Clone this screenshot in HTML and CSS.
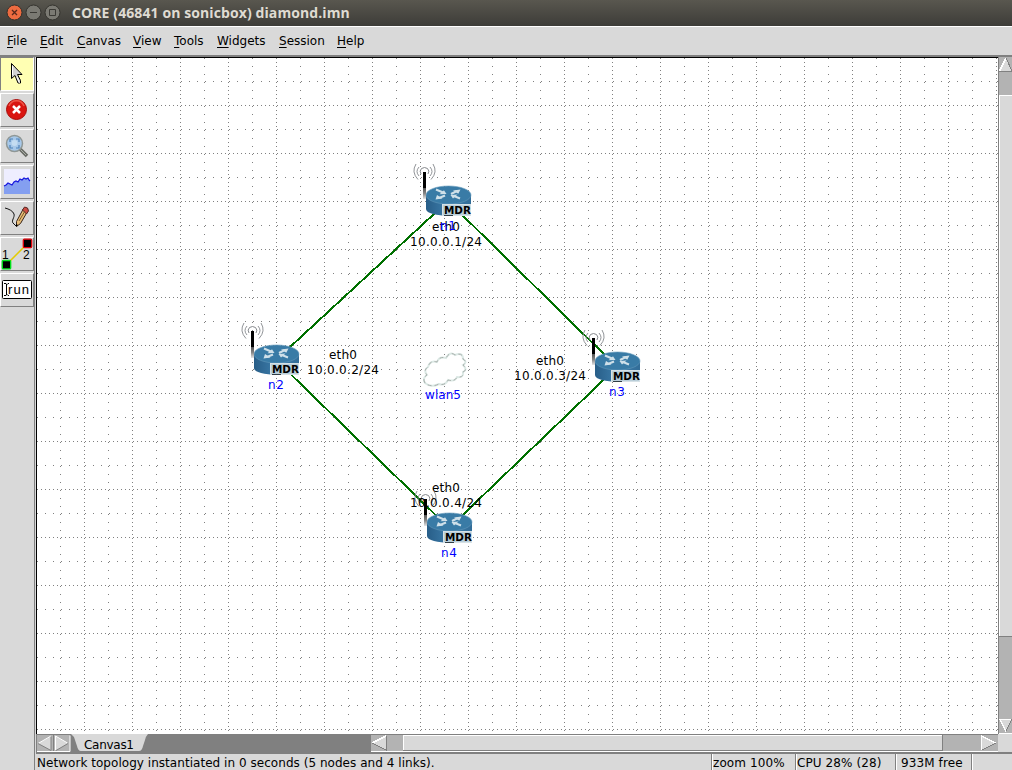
FILE: index.html
```html
<!DOCTYPE html>
<html lang="en">
<head>
<meta charset="utf-8">
<title>CORE (46841 on sonicbox) diamond.imn</title>
<link rel="stylesheet" href="styles.css">
</head>
<body>
<div class="window">
  <header class="titlebar">
    <svg class="controls" width="64" height="26" viewBox="0 0 64 26">
      <circle cx="14.5" cy="12.5" r="7.5" fill="#ed6b40" stroke="#34302a"/>
      <path d="M12 10l5 5M17 10l-5 5" stroke="#57281b" stroke-width="1.3"/>
      <circle cx="33.5" cy="12.5" r="7.5" fill="#7b7a73" stroke="#34332e"/>
      <path d="M30 12.5h7" stroke="#3b3a35"/>
      <circle cx="52.500" cy="12.500" r="7.500" fill="#7b7a73" stroke="#34332e"/>
      <path d="M49.500 9.500h6v6h-6z" fill="none" stroke="#3b3a35"/>
    </svg>
    <span class="title">CORE (46841 on sonicbox) diamond.imn</span>
  </header>
  <nav class="menubar">
    <span class="m-file"><u>F</u>ile</span><span class="m-edit"><u>E</u>dit</span><span class="m-canvas"><u>C</u>anvas</span><span class="m-view"><u>V</u>iew</span><span class="m-tools"><u>T</u>ools</span><span class="m-widgets"><u>W</u>idgets</span><span class="m-session"><u>S</u>ession</span><span class="m-help"><u>H</u>elp</span>
  </nav>
  <div class="main">
    <aside class="toolbar">
      <button class="tool active"><svg width="32" height="32" viewBox="1 58 32 32"><path d="M11.500 63.500v15l3.500-3 3 7.500h2.500v-2.500l-3-6h4.500z" fill="#d2d2d2" stroke="#000"/><path d="M12.500 66v9" stroke="#fff"/><path d="M17 77l2.500 6" stroke="#fff"/></svg></button>
      <button class="tool"><svg width="32" height="32" viewBox="1 94 32 32"><circle cx="16.500" cy="109.500" r="10" fill="#d91510" stroke="#a90b08"/><path d="M9 106a8 8 0 0 1 15 0" fill="none" stroke="#ef5547" stroke-width="1.500"/><path d="M13 106l7 7M20 106l-7 7" stroke="#fff" stroke-width="2.500"/></svg></button>
      <button class="tool"><svg width="32" height="32" viewBox="1 130 32 32"><path d="M20 149l7 7" stroke="#686b65" stroke-width="3.500"/><path d="M21 150l5 5" stroke="#aaaea7"/><circle cx="14.500" cy="143.500" r="8" fill="#a7c8e9" stroke="#8f9796" stroke-width="1.500"/><path d="M10 142v-3h3M16 139h3v3M19 145v3h-3M13 148h-3v-3" fill="none" stroke="#4f82b8" stroke-width="1.200"/><circle cx="14.500" cy="143" r="3" fill="#c4dcf1"/></svg></button>
      <button class="tool"><svg width="32" height="32" viewBox="1 166 32 32"><path d="M4 169h26v25H4z" fill="#eeeeff"/><path d="M4 186l2-1 2-2 2 1 2 1 2-3 2-1 2 1 2-3 2 1 2-2 2 1 2-1 1 2 1 1v13H4z" fill="#849ff0"/><path d="M4 186l2-1 2-2 2 1 2 1 2-3 2-1 2 1 2-3 2 1 2-2 2 1 2-1 1 2 1 1" fill="none" stroke="#1515dd" stroke-width="1.200"/></svg></button>
      <button class="tool"><svg width="32" height="32" viewBox="1 202 32 32"><path d="M5 208c4 1 8 3 9 6s-3 7-1 9l3 3" fill="none" stroke="#111"/><path d="M16.500 226.500v-5l7-13q3-1 4 3l-7 12z" fill="#e7bd78" stroke="#37251b"/><path d="M22.500 210l2-3q4 0 4 4l-2 3z" fill="#cc4b44" stroke="#542b26"/><path d="M19 221l6-10" stroke="#7b592a"/><path d="M16 227v-3l2 1z"/></svg></button>
      <button class="tool"><svg width="32" height="32" viewBox="1 238 32 32"><path d="M7 264l20-20" stroke="#e3cb00" stroke-width="1.500"/><rect x="2.300" y="260.500" width="8.400" height="8.400" rx="1" fill="#000" stroke="#00e51b" stroke-width="1.300"/><rect x="23.300" y="239.200" width="8.400" height="8.400" rx="1" fill="#000" stroke="#e30008" stroke-width="1.300"/><text x="2" y="259" class="digit">1</text><text x="23" y="259" class="digit">2</text></svg></button>
      <button class="tool"><svg width="32" height="32" viewBox="1 274 32 32"><rect x="2.500" y="280.500" width="29" height="18" rx="1" fill="#fff" stroke="#000"/><path d="M4 283.500h2l1 1 1-1h1M6.500 284v11M4 295.500h2l1-1 1 1h1" fill="none" stroke="#000"/><text x="8" y="294" class="run" textLength="21">run</text></svg></button>
    </aside>
    <section class="workspace">
      <div class="view">
        <svg class="canvas" width="962" height="677" viewBox="36 57 962 677">
          <defs>
            <pattern id="grid" x="36" y="57" width="48" height="48" patternUnits="userSpaceOnUse">
              <g stroke="#808080" stroke-width="1" shape-rendering="crispEdges">
                <path d="M1 .5H48M.5 1V48" stroke-dasharray="1 3"/>
                <path d="M1 24.500H48M24.500 1V48" stroke-dasharray="1 7"/>
              </g>
            </pattern>
            <linearGradient id="side"><stop offset="0" stop-color="#285e88"/><stop offset=".5" stop-color="#3d7dab"/><stop offset="1" stop-color="#326d98"/></linearGradient>
            <linearGradient id="mast" x2="0" y2="1"><stop offset=".58" stop-color="#000"/><stop offset=".6" stop-color="#555"/><stop offset=".8" stop-color="#888"/><stop offset="1" stop-color="#e5e5e5"/></linearGradient>
            <g id="router">
              <path d="M-22-6v14c0 9 45 9 45 0V-6z" fill="url(#side)"/>
              <ellipse cx=".5" cy="-6" rx="22.500" ry="9" fill="#397ba6" stroke="#6399bb" stroke-width=".6"/>
              <path d="M-12-11.500l7 3M3-7l6-3M-3-5.500l-6 2.500M12-2.500l-6-2.500" stroke="#cfe0e9" stroke-width="2"/>
              <path d="M-1.500-7l-7 .2 4.500-4zM12.500-11.500l-2.200 4.200-5.300-3.200zM-12.500-1.500l1.500-4.500 5.500 3.500zM2.500-6l7-.5-4.500 4z" fill="#cfe0e9"/>
              <rect x="-5.500" y="3.500" width="28" height="11" fill="#b9ced9" stroke="#d6e1e6"/>
              <path d="M-4 14.500H5" stroke="#303d45"/>
              <text x="-4" y="13" class="mdr" textLength="27" lengthAdjust="spacingAndGlyphs">MDR</text>
              <rect x="-25" y="-29" width="3" height="27" fill="url(#mast)"/>
              <g fill="none" stroke="#85888c"><path d="M-27-27q-2-3 .5-5.500 3-2 6 0 2.500 2.500 .5 5.500"/><path d="M-29-34q-4 4.500 0 9M-18-34q4 4.500 0 9M-32-37q-5 8 2 15.500M-15-37q5 8-2 15.500" stroke-width=".9"/></g>
            </g>
          </defs>
          <rect x="36" y="57" width="962" height="677" fill="#fff"/>
          <rect x="36" y="57" width="962" height="677" fill="url(#grid)"/>
          <path class="link" d="M448 201L276 360L449 528L617 367Z"/>
          <g fill="none">
            <path d="M425 383q-3-5 2-8-4-5 1-8 2-7 9-5 2-6 9-4 4-7 9-3 8-3 8 4 5 3 0 6 5 5 0 7 1 6-6 5-2 5-9 3-3 6-9 4-8 4-14-1z" fill="#fff" stroke="#dce9e5" stroke-width="2"/>
            <path d="M425 383q-3-5 2-8-4-5 1-8 2-7 9-5 2-6 9-4 4-7 9-3 8-3 8 4 5 3 0 6 5 5 0 7 1 6-6 5-2 5-9 3-3 6-9 4-8 4-14-1z" stroke="#a9afac" stroke-dasharray="4 3"/>
          </g>
          <use href="#router" x="448" y="201"/>
          <use href="#router" x="276" y="360"/>
          <use href="#router" x="617" y="367"/>
          <use href="#router" x="449" y="528"/>
          <g class="address">
            <text x="432" y="231" textLength="28">eth0</text><text x="410" y="246" textLength="72">10.0.0.1/24</text>
            <text x="329" y="359" textLength="28">eth0</text><text x="307" y="374" textLength="72">10.0.0.2/24</text>
            <text x="536" y="365" textLength="28">eth0</text><text x="514" y="380" textLength="72">10.0.0.3/24</text>
            <text x="432" y="492" textLength="28">eth0</text><text x="410" y="507" textLength="72">10.0.0.4/24</text>
          </g>
          <g class="name"><text x="440" y="230" textLength="16">n1</text><text x="268" y="389" textLength="16">n2</text><text x="609" y="396" textLength="16">n3</text><text x="441" y="557" textLength="16">n4</text><text x="425" y="399" textLength="36">wlan5</text></g>
          <path d="M36 57.500H998M36.500 57V734" stroke="#000" shape-rendering="crispEdges"/>
        </svg>
        <svg class="vscroll" width="14" height="677" viewBox="998 57 14 677" shape-rendering="crispEdges">
          <path d="M998 57h14v677h-14z" fill="#b3b3b3"/><path d="M998.500 57v677" stroke="#808080"/>
          <path d="M999 71l7-13 6 12v1z" fill="#d9d9d9"/><path d="M999.500 71l6.500-13" stroke="#fff" stroke-width="1.500"/><path d="M1006 58l6 13h-13" fill="none" stroke="#808080"/>
          <path d="M999 95h13v541h-13z" fill="#d9d9d9"/><path d="M999.500 636V95.500h13" fill="none" stroke="#fff"/><path d="M999 636.500h13" stroke="#808080"/>
          <path d="M999 719h13l-6 13z" fill="#d9d9d9"/><path d="M1012 719.500h-12l6 12" fill="none" stroke="#fff" stroke-width="1.500"/><path d="M1006 731l6-12" stroke="#808080"/><path d="M999 733.500h13" stroke="#fff"/>
        </svg>
      </div>
      <div class="bottombar">
        <svg class="tabs" width="335" height="18" viewBox="36 734 335 18">
          <path d="M36 734h335v18H36z" fill="#808080"/><path d="M37 735h33v16H37z" fill="#b3b3b3"/><path d="M37 751.500h33v-16" fill="none" stroke="#fff"/>
          <path d="M38 743.500l13-7v14zM68 743.500l-12-7v14z" fill="#d9d9d9"/><path d="M51 736l-13 7.500M55.500 750v-14l12 7" fill="none" stroke="#fff"/><path d="M38 743.500l13 7v-14M68 743.500l-12 7M53.500 735v16" fill="none" stroke="#808080"/>
          <path d="M71 734h77q-2 2-3 6l-2 6q-1 5-4 5H81q-3 0-4-5l-2-6q-1-4-4-6z" fill="#d9d9d9"/><text x="84" y="749" textLength="50">Canvas1</text>
        </svg>
        <svg class="hscroll" width="627" height="18" viewBox="371 734 627 18" shape-rendering="crispEdges">
          <path d="M371 734h627v18H371z" fill="#b3b3b3"/><path d="M371 734.500h627" stroke="#808080"/><path d="M371 751.500h627V734" fill="none" stroke="#fff"/>
          <path d="M372 743l14-7v14z" fill="#d9d9d9"/><path d="M386 736l-14 7" stroke="#fff" stroke-width="1.500"/><path d="M372 743l14 7v-14" fill="none" stroke="#808080"/>
          <path d="M403 735h540v16H403z" fill="#d9d9d9"/><path d="M403.500 751v-15.500h539" fill="none" stroke="#fff"/><path d="M403 750.500h539.500V735" fill="none" stroke="#808080"/>
          <path d="M981 736l15 7-15 7z" fill="#d9d9d9"/><path d="M981.500 750v-14l14 7" fill="none" stroke="#fff" stroke-width="1.500"/><path d="M982 750l14-7" stroke="#808080"/>
        </svg>
        <div class="corner"></div>
      </div>
      <footer class="status"><span class="message">Network topology instantiated in 0 seconds (5 nodes and 4 links).</span><span class="zoom">zoom 100%</span><span class="cpu">CPU 28% (28)</span><span class="memory">933M free</span></footer>
    </section>
  </div>
</div>
</body>
</html>
```
FILE: styles.css
```css
* { box-sizing: border-box; }
body { margin: 0; overflow: hidden; background: #d9d9d9; color: #000; font: 12px "DejaVu Sans", sans-serif; }
svg { display: block; flex: none; }
.window { width: 1012px; height: 770px; display: flex; flex-direction: column; }
.titlebar { height: 26px; display: flex; align-items: center; background: linear-gradient(#59574f, #3d3c38); flex: none; }
.title { margin-left: 8px; color: #dfdbd2; font: bold 14px/26px "Open Sans", sans-serif; letter-spacing: .1px; white-space: nowrap; }
.menubar { height: 29px; border-top: 1px solid #fff; padding-left: 7px; display: flex; line-height: 29px; flex: none; white-space: nowrap; }
.menubar u { text-underline-offset: 2px; text-decoration-thickness: 1px; }
.menubar span { flex: none; }
.m-file { width: 33px; }
.m-edit { width: 37px; }
.m-canvas { width: 56px; }
.m-view { width: 41px; }
.m-tools { width: 43px; }
.m-widgets { width: 62px; }
.m-session { width: 58px; }
.main { display: flex; height: 715px; border-top: 2px solid #808080; }
.toolbar { width: 35px; flex: none; display: flex; flex-direction: column; gap: 2px; }
.toolbar { border-right: 1px solid #808080; }
.tool { width: 34px; height: 34px; flex: none; padding: 0; border: 1px solid; border-color: #fff #808080 #808080 #fff; background: #d9d9d9; display: block; }
.tool.active { background: #ffffb3; border-color: #808080 #fff #fff #808080; }
.digit { font-size: 12px; }
.run { font-size: 13px; }
.workspace { width: 977px; padding-left: 1px; display: flex; flex-direction: column; }
.view { display: flex; height: 677px; flex: none; }
.link { fill: none; stroke: #007000; stroke-width: 2; shape-rendering: crispEdges; }
.mdr { font: bold 10.5px "DejaVu Sans", sans-serif; }
.name { fill: #0000ff; }
.bottombar { display: flex; height: 18px; flex: none; }
.corner { width: 14px; background: #d9d9d9; }
.status { height: 18px; border-top: 2px solid #808080; display: flex; line-height: 19px; white-space: nowrap; }
.status span { border-right: 1px solid #808080; flex: none; padding-left: 1px; box-shadow: 1px 0 #fff; }
.message { width: 676px; letter-spacing: .04px; }
.status .zoom { width: 84px; letter-spacing: .1px; }
.status .cpu { width: 100px; letter-spacing: .1px; }
.status .memory { width: 76px; padding-left: 5px; letter-spacing: .1px; }
```
